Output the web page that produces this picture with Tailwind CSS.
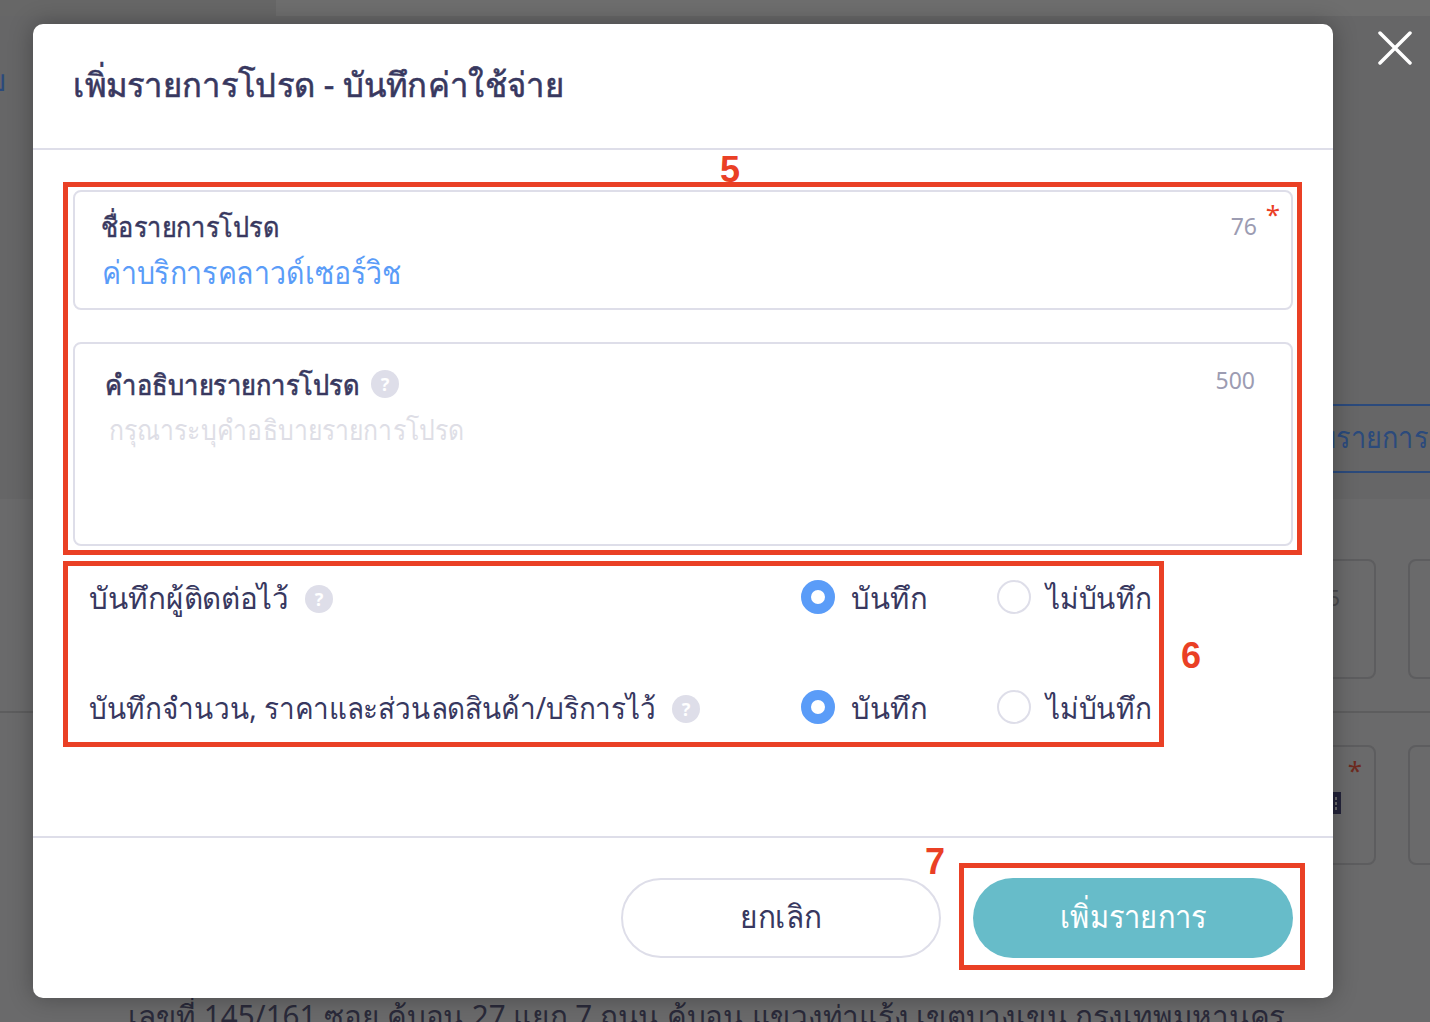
<!DOCTYPE html>
<html lang="th">
<head>
    <meta charset="UTF-8">
    <meta name="viewport" content="width=device-width, initial-scale=1.0">
    <title>เพิ่มรายการโปรด</title>
    <script src="https://cdn.jsdelivr.net/npm/@tailwindcss/browser@4"></script>
</head>
<body class="bg-[#6a6a6b] font-['Noto_Sans','Liberation_Sans',sans-serif]">
    <div class="relative w-[1430px] h-[1022px] overflow-hidden">

        <!-- Page behind the overlay -->
        <div class="flex flex-col h-full">
            <div class="flex h-4 bg-[#6e6e6e] shrink-0">
                <div class="w-[276px] bg-[#676767]"></div>
            </div>
            <div class="relative h-[483px] bg-[#666667] flex flex-col items-end pt-[388px] shrink-0">
                <span class="absolute -left-[13px] top-[44px] text-[30px] leading-10 text-[#2b4a7c]">บ</span>
                <div class="w-[97px] h-[69px] border-y-2 border-[#2b4a7c] flex items-center overflow-hidden">
                    <span class="text-[30px] leading-[40px] text-[#2b4a7c] whitespace-nowrap -ml-[14px] -mt-1 origin-left scale-x-[.9]">บรายการ</span>
                </div>
            </div>
            <div class="h-[214px] border-b-2 border-[#5d5d5e] flex justify-end gap-8 pt-[60px] -mr-[38px] shrink-0">
                <div class="w-[140px] h-[120px] rounded-lg border-2 border-[#5d5d5f] flex justify-end pr-[34px] pt-5 text-[22px] text-[#4a4a4e]">5</div>
                <div class="w-[60px] h-[120px] rounded-lg border-2 border-[#5d5d5f]"></div>
            </div>
            <div class="flex justify-end gap-8 pt-[32px] -mr-[38px] shrink-0">
                <div class="relative w-[140px] h-[120px] rounded-lg border-2 border-[#5d5d5f] flex justify-end pr-3 pt-1 text-[26px] text-[#6e2a20]">
                    *
                    <svg class="absolute left-[95px] top-[43px] w-2 h-6" viewBox="0 0 8 24" fill="#23233a"><path d="M0 2h8v22H0z"/><path fill="#6a6a6b" d="M2 7h2v3H2zm0 5h2v3H2zm0 5h2v3H2z"/></svg>
                </div>
                <div class="w-[60px] h-[120px] rounded-lg border-2 border-[#5d5d5f]"></div>
            </div>
            <div class="pl-[128px] pt-[131px] text-[30px] leading-[40px] text-[#2a2a3a] whitespace-nowrap">
                <span class="inline-block origin-left scale-x-[.987]">เลขที่ 145/161 ซอย คู้บอน 27 แยก 7 ถนน คู้บอน แขวงท่าแร้ง เขตบางเขน กรุงเทพมหานคร</span>
            </div>
        </div>

        <!-- Close -->
        <svg class="absolute left-[1378px] top-[31px] w-[34px] h-[34px]" viewBox="0 0 34 34" fill="none" stroke="#fff" stroke-width="3.5" stroke-linecap="round"><path d="M2 2 32 32M32 2 2 32"/></svg>

        <!-- Modal -->
        <div class="absolute left-[33px] top-[24px] w-[1300px] h-[974px] bg-white rounded-[10px] shadow-[0_0_24px_rgba(0,0,0,0.3)] flex flex-col text-[#38385f]">
            <div class="h-[126px] border-b-2 border-[#dedee9] pl-10 pt-[33px] shrink-0">
                <h1 class="text-[34px] leading-[54px] whitespace-nowrap origin-left scale-x-[.965] [-webkit-text-stroke:0.6px_#38385f]">เพิ่มรายการโปรด - บันทึกค่าใช้จ่าย</h1>
            </div>

            <div class="flex-1 px-10 pt-10">
                <!-- name field -->
                <div class="relative h-[120px] border-2 border-[#dedee9] rounded-lg pl-[26px] pr-[34px] pt-[14px]">
                    <div class="flex justify-between items-center h-10">
                        <span class="text-[28px] whitespace-nowrap origin-left scale-x-[.904] [-webkit-text-stroke:0.5px_#38385f]">ชื่อรายการโปรด</span>
                        <span class="text-[23px] text-[#9c9cb2]">76</span>
                    </div>
                    <div class="text-[32px] leading-[50px] text-[#5a9cf8] pl-[1px] mt-[1px] whitespace-nowrap origin-left scale-x-[.89]">ค่าบริการคลาวด์เซอร์วิช</div>
                    <span class="absolute right-[11px] top-[9px] text-[26px] leading-[26px] text-[#ea4025]">*</span>
                </div>

                <!-- description field -->
                <div class="h-[204px] border-2 border-[#dedee9] rounded-lg pl-[30px] pr-9 pt-[20px] mt-8">
                    <div class="flex justify-between items-center h-10">
                        <span class="flex items-center">
                            <span class="w-[266px] text-[28px] whitespace-nowrap origin-left scale-x-[.908] [-webkit-text-stroke:0.7px_#38385f]">คำอธิบายรายการโปรด</span>
                            <span class="w-7 h-7 rounded-full bg-[#dedee9] text-white text-lg font-bold flex items-center justify-center">?</span>
                        </span>
                        <span class="text-[23px] text-[#9c9cb2] -mt-2">500</span>
                    </div>
                    <div class="text-[28px] leading-[50px] text-[#dedee6] pl-1 whitespace-nowrap origin-left scale-x-[.885]">กรุณาระบุคำอธิบายรายการโปรด</div>
                </div>

                <!-- radio rows -->
                <div class="flex flex-col gap-[70px] pl-4 pt-[31px] w-[1078px]">
                    <div class="flex items-center h-10">
                        <span class="w-[216px] text-[30px] whitespace-nowrap origin-left scale-x-[.985]">บันทึกผู้ติดต่อไว้</span>
                        <span class="mt-1 w-7 h-7 rounded-full bg-[#dedee9] text-white text-lg font-bold flex items-center justify-center">?</span>
                        <span class="ml-auto w-[34px] h-[34px] rounded-full border-[10px] border-[#5a9cf8]"></span>
                        <span class="text-[30px] ml-4 w-[146px] whitespace-nowrap origin-left scale-x-[.975]">บันทึก</span>
                        <span class="w-[34px] h-[34px] rounded-full border-2 border-[#dedee9]"></span>
                        <span class="text-[30px] ml-[15px] w-[105px] whitespace-nowrap origin-left scale-x-[.935]">ไม่บันทึก</span>
                    </div>
                    <div class="flex items-center h-10">
                        <span class="w-[583px] text-[30px] whitespace-nowrap origin-left scale-x-[.931]">บันทึกจำนวน, ราคาและส่วนลดสินค้า/บริการไว้</span>
                        <span class="mt-1 w-7 h-7 rounded-full bg-[#dedee9] text-white text-lg font-bold flex items-center justify-center">?</span>
                        <span class="ml-auto w-[34px] h-[34px] rounded-full border-[10px] border-[#5a9cf8]"></span>
                        <span class="text-[30px] ml-4 w-[146px] whitespace-nowrap origin-left scale-x-[.975]">บันทึก</span>
                        <span class="w-[34px] h-[34px] rounded-full border-2 border-[#dedee9]"></span>
                        <span class="text-[30px] ml-[15px] w-[105px] whitespace-nowrap origin-left scale-x-[.935]">ไม่บันทึก</span>
                    </div>
                </div>
            </div>

            <!-- footer -->
            <div class="h-[162px] border-t-2 border-[#dedee9] flex justify-end gap-8 pr-10 pt-10 shrink-0">
                <button class="w-[320px] h-20 rounded-full border-2 border-[#dedee9] text-[32px] leading-[70px] pb-[4px]"><span class="inline-block scale-x-[.93]">ยกเลิก</span></button>
                <button class="w-[320px] h-20 rounded-full bg-[#67bcc9] text-white text-[32px] leading-[70px] pb-[4px]"><span class="inline-block scale-x-[.907]">เพิ่มรายการ</span></button>
            </div>
        </div>

        <!-- Red annotation boxes -->
        <div class="absolute left-[63px] top-[182px] w-[1239px] h-[373px] border-[5px] border-[#ea4025]"></div>
        <div class="absolute left-[63px] top-[561px] w-[1101px] h-[186px] border-[5px] border-[#ea4025]"></div>
        <div class="absolute left-[959px] top-[863px] w-[346px] h-[107px] border-[5px] border-[#ea4025]"></div>
        <span class="absolute left-[720px] top-[150px] text-[36px] leading-[40px] font-bold text-[#ea4025] font-['Liberation_Sans']">5</span>
        <span class="absolute left-[1181px] top-[636px] text-[36px] leading-[40px] font-bold text-[#ea4025] font-['Liberation_Sans']">6</span>
        <span class="absolute left-[925px] top-[842px] text-[36px] leading-[40px] font-bold text-[#ea4025] font-['Liberation_Sans']">7</span>
    </div>
</body>
</html>
